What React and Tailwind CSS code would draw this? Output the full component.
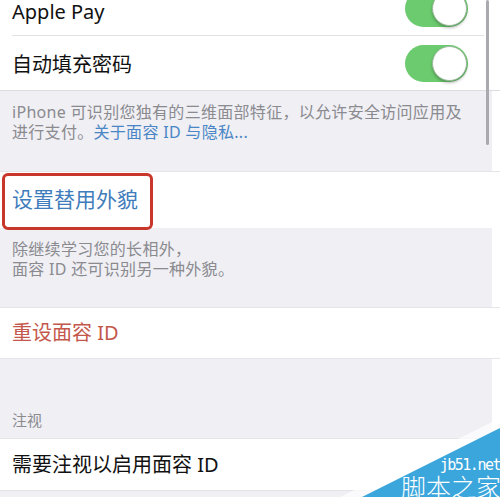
const cjk = { fontFamily: '"Noto Sans", "Noto Sans CJK SC", sans-serif' }

function Toggle({ className = '' }) {
  return (
    <div className={`relative w-[63px] h-[37px] rounded-full bg-[#6ccb6e] shrink-0 ${className}`}>
      <div className="absolute right-[1px] top-[1px] w-[35px] h-[35px] rounded-full bg-white border border-[#9bb89b] shadow-[0_2px_3px_rgba(0,0,0,0.25)]" />
    </div>
  )
}

function Footer({ children, className = '' }) {
  return (
    <div className={`bg-[#efeff4] mr-[8px] px-[12px] text-[16px] leading-[20px] text-[#8a8a8f] ${className}`}>
      {children}
    </div>
  )
}

export default function App() {
  return (
    <div className="relative w-[500px] h-[497px] overflow-hidden bg-white" style={cjk}>
      <div className="flex flex-col">
        <div className="bg-white -mt-[20px] h-[55px] flex items-center justify-between pl-[12px] pr-[32px]">
          <span className="text-[20px] text-[#111] mt-[8px]">Apple Pay</span>
          <Toggle className="mt-[2px]" />
        </div>
        <div className="ml-[12px] mr-[16px] h-px bg-[#e2e2e4]" />
        <div className="bg-white h-[55px] flex items-center justify-between pl-[12px] pr-[32px] border-b border-[#dcdce0]">
          <span className="text-[20px] text-[#111] mt-[3px]">自动填充密码</span>
          <Toggle />
        </div>

        <Footer className="pt-[11px] h-[80px] tracking-[0.3px]">
          <div>iPhone 可识别您独有的三维面部特征，以允许安全访问应用及</div>
          <div>
            进行支付。<span className="text-[#4a86c5]">关于面容 ID 与隐私...</span>
          </div>
        </Footer>

        <div className="relative bg-white h-[57px] flex items-center px-[12px] border-t border-[#e4e4e8]">
          <span className="text-[21px] text-[#3f7cbb]">设置替用外貌</span>
          <div className="absolute left-[2px] top-[1px] w-[151px] h-[57px] rounded-[6px] border-[3px] border-[#c9372c]" />
        </div>

        <Footer className="pt-[11px] h-[79px] tracking-[0.3px]">
          <div>除继续学习您的长相外，</div>
          <div>面容 ID 还可识别另一种外貌。</div>
        </Footer>

        <div className="bg-white h-[52px] flex items-center px-[12px] border-y border-[#e6e6ea]">
          <span className="text-[20px] text-[#c4574b]">重设面容 ID</span>
        </div>

        <Footer className="h-[79px] flex items-end pb-[8px]">
          <span className="text-[15px]">注视</span>
        </Footer>

        <div className="bg-white h-[53px] flex items-center px-[12px] border-y border-[#e4e4e8]">
          <span className="text-[20px] text-[#111]">需要注视以启用面容 ID</span>
        </div>

        <Footer className="h-[20px]" />
      </div>

      <div className="absolute left-[486px] top-0 w-[3px] h-[145px] rounded-full bg-[#a9a9ae]" />

      <svg className="absolute left-0 top-0" width="500" height="497" viewBox="0 0 500 497">
        <polygon points="340,497 500,418 500,497" fill="#ffffff" opacity="0.7" />
        <polygon points="362,497 500,428 500,497" fill="#3ba6dc" />
      </svg>
      <div
        className="absolute right-[0px] top-[457px] text-white text-[15px] leading-[16px] tracking-[-1.5px]"
        style={{ fontFamily: '"DejaVu Sans Mono", monospace' }}
      >
        jb51.net
      </div>
      <div className="absolute right-[-1px] top-[475px] text-white text-[25px] leading-[25px] font-light">
        脚本之家
      </div>
    </div>
  )
}
